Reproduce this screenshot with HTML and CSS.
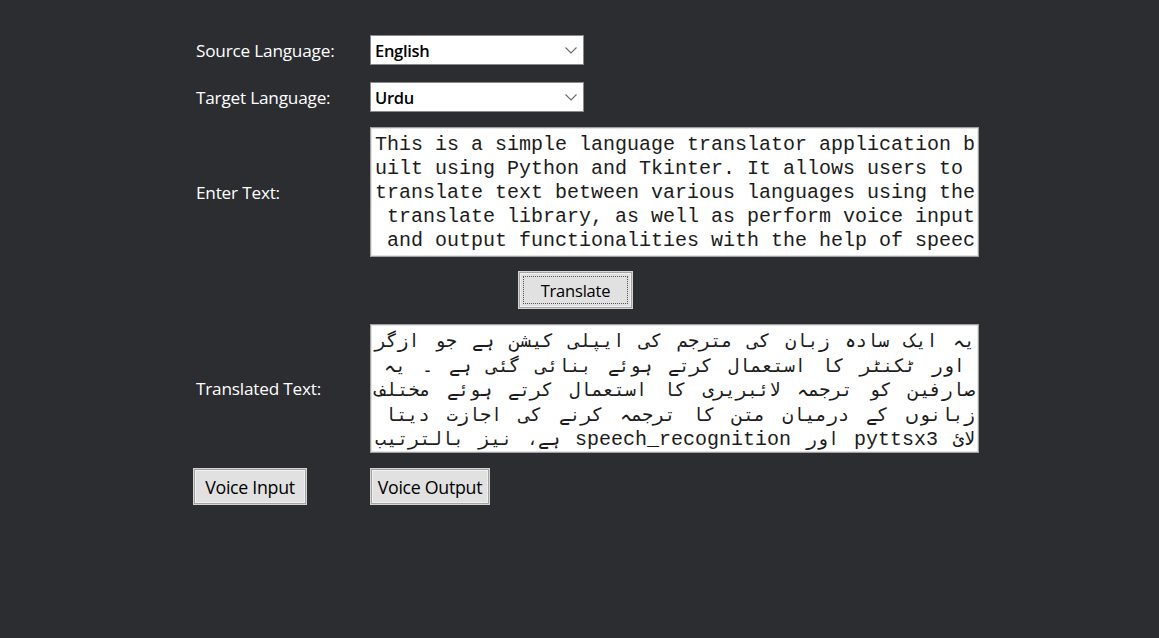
FILE: index.html
```html
<!DOCTYPE html>
<html>
<head>
<meta charset="utf-8">
<link rel="stylesheet" href="styles.css">
</head>
<body>
<div class="app">
  <div class="row r-src">
    <div class="label">Source Language:</div>
    <div class="combo">
      <span class="combo-text">English</span>
      <svg class="chev" width="12" height="7" viewBox="0 0 12 7"><path d="M0.5 0.5 L6 6 L11.5 0.5" fill="none" stroke="#6b6b6b" stroke-width="1.1"/></svg>
    </div>
  </div>
  <div class="row r-tgt">
    <div class="label">Target Language:</div>
    <div class="combo">
      <span class="combo-text">Urdu</span>
      <svg class="chev" width="12" height="7" viewBox="0 0 12 7"><path d="M0.5 0.5 L6 6 L11.5 0.5" fill="none" stroke="#6b6b6b" stroke-width="1.1"/></svg>
    </div>
  </div>
  <div class="row r-enter">
    <div class="label">Enter Text:</div>
    <div class="textbox en">
<div class="ln">This is a simple language translator application b</div>
<div class="ln">uilt using Python and Tkinter. It allows users to </div>
<div class="ln">translate text between various languages using the</div>
<div class="ln"> translate library, as well as perform voice input</div>
<div class="ln"> and output functionalities with the help of speec</div>
    </div>
  </div>
  <div class="row r-btn">
    <div class="btn translate"><span class="focus">Translate</span></div>
  </div>
  <div class="row r-out">
    <div class="label">Translated Text:</div>
    <div class="textbox ur">
      <div class="uln"><span class="w">یہ</span><span class="w">ایک</span><span class="w">سادہ</span><span class="w">زبان</span><span class="w">کی</span><span class="w">مترجم</span><span class="w">کی</span><span class="w">ایپلی</span><span class="w">کیشن</span><span class="w">ہے</span><span class="w">جو</span><span class="w">ازگر</span></div>
      <div class="uln"><span class="w">اور</span><span class="w">ٹکنٹر</span><span class="w">کا</span><span class="w">استعمال</span><span class="w">کرتے</span><span class="w">ہوئے</span><span class="w">بنائی</span><span class="w">گئی</span><span class="w">ہے</span><span class="w">۔</span><span class="w">یہ</span></div>
      <div class="uln"><span class="w">صارفین</span><span class="w">کو</span><span class="w">ترجمہ</span><span class="w">لائبریری</span><span class="w">کا</span><span class="w">استعمال</span><span class="w">کرتے</span><span class="w">ہوئے</span><span class="w">مختلف</span></div>
      <div class="uln"><span class="w">زبانوں</span><span class="w">کے</span><span class="w">درمیان</span><span class="w">متن</span><span class="w">کا</span><span class="w">ترجمہ</span><span class="w">کرنے</span><span class="w">کی</span><span class="w">اجازت</span><span class="w">دیتا</span></div>
      <div class="uln"><span class="w">لائ</span><span class="lat">pyttsx3</span><span class="w">اور</span><span class="lat">speech_recognition</span><span class="grp"><span class="w">ہے</span><span class="w">،</span></span><span class="w">نیز</span><span class="w">بالترتیب</span></div>
    </div>
  </div>
  <div class="row r-voice">
    <div class="btn vin">Voice Input</div>
    <div class="btn vout">Voice Output</div>
  </div>
</div>
</body>
</html>
```
FILE: styles.css
```css
html, body {
  margin: 0;
  padding: 0;
  background: #2b2d31;
  width: 1159px;
  height: 638px;
  overflow: hidden;
}
.app {
  padding: 35px 0 0 193px;
  font-family: "Open Sans", "Noto Sans", sans-serif;
  font-size: 17.2px;
  color: #ffffff;
}
.row {
  display: flex;
  align-items: center;
}
.label {
  width: 174px;
  padding-left: 3px;
  flex: none;
  letter-spacing: -0.2px;
}
.r-tgt { margin-top: 17px; }
.r-enter { margin-top: 15px; }
.r-btn { margin-top: 14px; padding-left: 325px; }
.r-out { margin-top: 15px; }
.r-voice { margin-top: 15px; gap: 63px; }

.combo {
  box-sizing: border-box;
  width: 214px;
  height: 30px;
  background: #ffffff;
  border: 1px solid #8a8a8a;
  display: flex;
  align-items: center;
  justify-content: space-between;
  padding: 0 6px 0 4px;
}
.combo-text {
  color: #000000;
  font-weight: 600;
  font-size: 16.5px;
  letter-spacing: -0.3px;
}
.chev { display: block; margin-top: 1px; }

.textbox {
  box-sizing: border-box;
  width: 609px;
  background: #ffffff;
  border: 1px solid #a0a0a0;
  box-shadow: inset 0 0 0 1px #e3e3e3;
  padding: 5px 3px 3px 4px;
  color: #1c1c1c;
}
.textbox.en { height: 130px; }
.textbox.ur { height: 129px; padding-top: 4px; }
.ln {
  white-space: pre;
  height: 24px;
  line-height: 24px;
  font-family: "Liberation Mono", "DejaVu Sans Mono", monospace;
  font-size: 20px;
}
.uln {
  box-sizing: border-box;
  display: flex;
  flex-direction: row-reverse;
  justify-content: space-between;
  align-items: baseline;
  height: 24.5px;
  line-height: 24.5px;
  white-space: pre;
  font-family: "DejaVu Sans Mono", "Liberation Mono", monospace;
  font-size: 18.5px;
}
.ur .uln:nth-child(2) { padding-left: 9px; padding-right: 10px; }
.ur .uln:nth-child(4) { padding-left: 10px; }
.w {
  direction: rtl;
}
.grp { display: flex; flex-direction: row-reverse; align-items: baseline; }
.lat {
  font-family: "Liberation Mono", monospace;
  font-size: 20px;
}

.btn {
  box-sizing: border-box;
  height: 37px;
  background: #e1e1e1;
  border: 1px solid #d4d4d4;
  box-shadow: inset 0 0 0 1px #a3a3a3, inset 0 0 0 2px #f0f0f0;
  color: #000;
  display: flex;
  align-items: center;
  justify-content: center;
  font-size: 17.8px;
  letter-spacing: -0.3px;
}
.translate {
  width: 115px;
  height: 38px;
  font-size: 16.5px;
  letter-spacing: -0.2px;
}
.focus {
  box-sizing: border-box;
  width: 105px;
  height: 28px;
  border: 1px dotted #555;
  display: flex;
  align-items: center;
  justify-content: center;
}
.vin { width: 114px; }
.vout { width: 120px; }
```
